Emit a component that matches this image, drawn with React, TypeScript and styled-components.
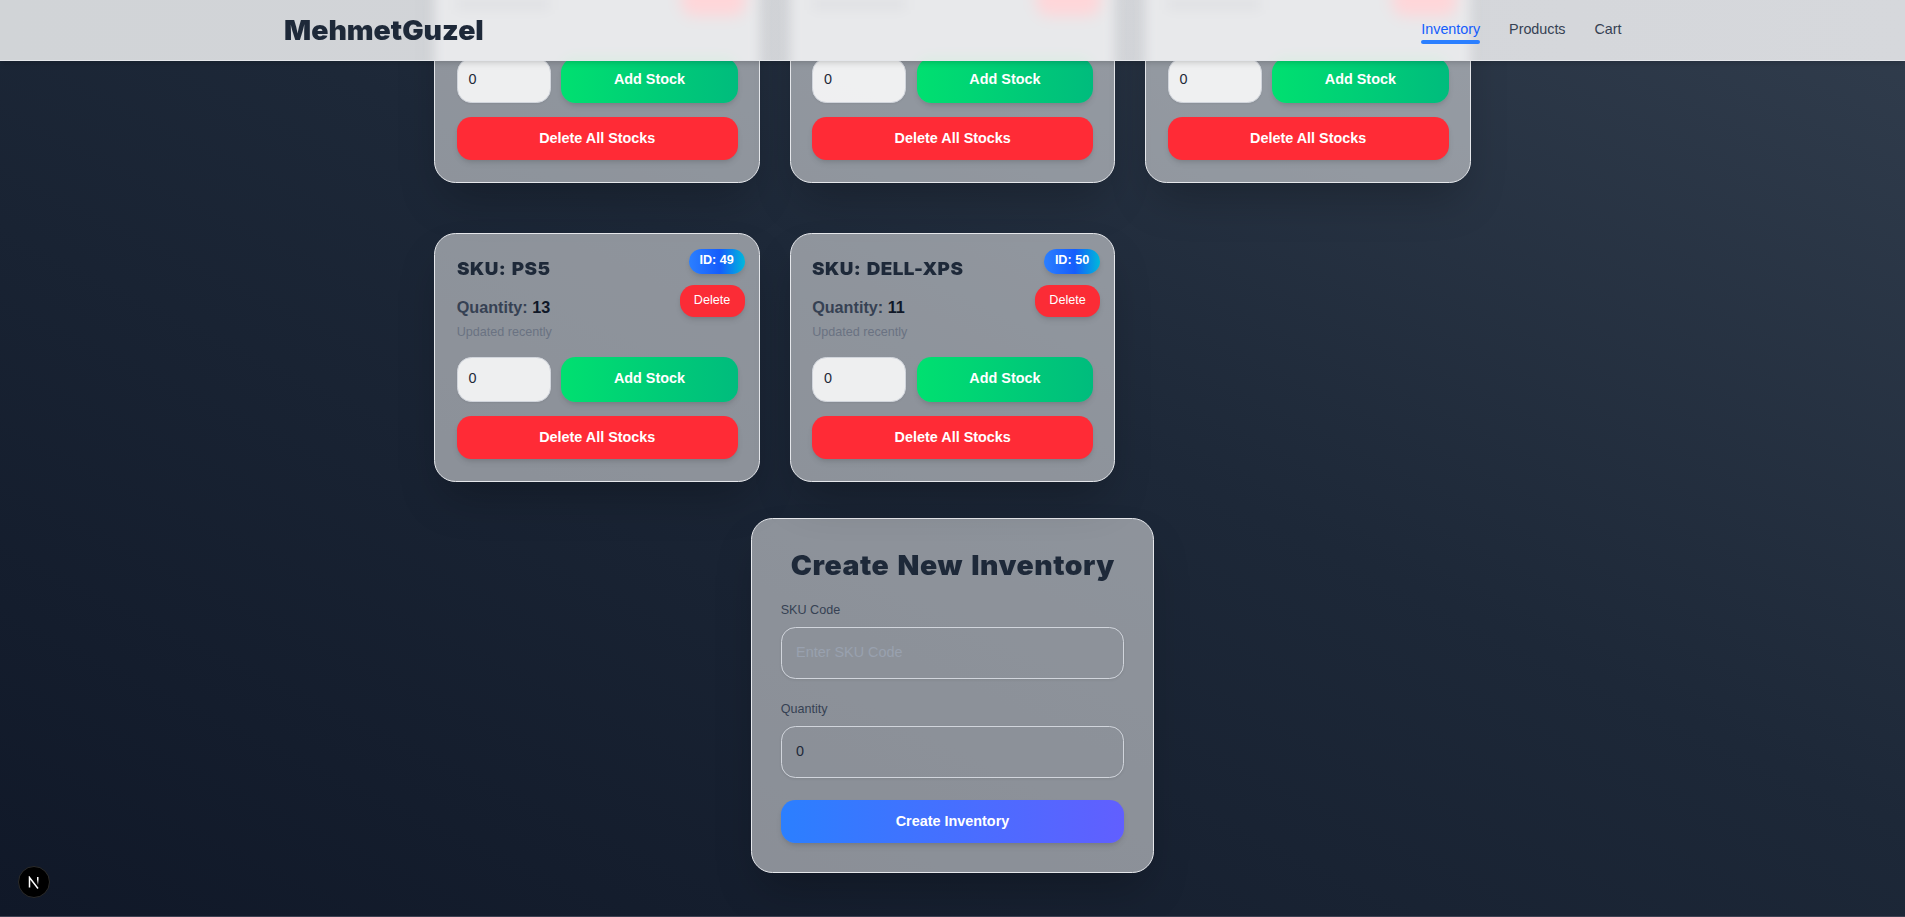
import React from 'react';
import styled, { createGlobalStyle } from 'styled-components';

const GlobalStyle = createGlobalStyle`
  *, *::before, *::after { box-sizing: border-box; }
  html { font-size: 14.4px; }
  body {
    margin: 0;
    height: 917px;
    overflow: hidden;
    font-family: "Liberation Sans", Arial, sans-serif;
    color: #1e2939;
  }
  h1, h2, h3, p { margin: 0; }
  button, input { font-family: inherit; }
`;

const Page = styled.div`
  position: relative;
  height: 917px;
  overflow: hidden;
  background: linear-gradient(to top right, #101828 0%, #1d2838 55%, #313d4d 100%);
  border-bottom: 1px solid #3e4152;
`;

const Header = styled.header`
  position: absolute;
  inset: 0 0 auto 0;
  z-index: 10;
  height: 61px;
  display: flex;
  justify-content: center;
  background: linear-gradient(to right, #d1d4d7, #d2d4d8 30%, #d6d8dc);
  border-bottom: 1px solid #e5e7eb;
  box-shadow: 0 4px 6px -1px rgba(0, 0, 0, 0.1), 0 2px 4px -2px rgba(0, 0, 0, 0.1);
`;

/* Frosted glass: soft shapes of the cards that have scrolled beneath the bar */
const Frost = styled.div`
  position: absolute;
  inset: 0;
  overflow: hidden;
  display: flex;
  justify-content: center;
  gap: 29.6px;
`;

const FrostCard = styled.div`
  position: relative;
  flex: 0 0 325.9px;
  height: 110px;
  margin-top: -24px;
  background: #e8e9eb;
  filter: blur(6px);
  box-shadow: 0 0 26px rgba(0, 0, 0, 0.04);

  &::before {
    content: '';
    position: absolute;
    top: 2px;
    right: 14px;
    width: 65px;
    height: 38px;
    border-radius: 14px;
    background: #ffd6d9;
    filter: blur(4px);
  }

  &::after {
    content: '';
    position: absolute;
    top: 81px;
    right: 22px;
    width: 177px;
    height: 45px;
    border-radius: 14px;
    background: #dcece4;
  }
`;

const FrostText = styled.div`
  position: absolute;
  top: 22px;
  left: 22px;
  width: 94px;
  height: 12px;
  background: #e0e1e4;
`;

const HeaderInner = styled.div`
  position: relative;
  width: 1338px;
  display: flex;
  align-items: center;
  justify-content: space-between;
`;

const Logo = styled.h1`
  font-family: Inter, "Liberation Sans", sans-serif;
  font-size: 26.8px;
  line-height: 32px;
  font-weight: 900;
  transform: scaleX(1.06);
  transform-origin: left center;
`;

const Nav = styled.nav`
  display: flex;
  gap: 29px;
`;

const NavLink = styled.a<{ $active?: boolean }>`
  position: relative;
  height: 28px;
  padding-top: 3px;
  font-size: 14.4px;
  line-height: 21.6px;
  letter-spacing: -0.05px;
  color: ${p => (p.$active ? '#155dfc' : '#364153')};

  &::after {
    content: '';
    position: absolute;
    left: 0;
    right: 0;
    bottom: 0;
    height: 4px;
    border-radius: 2px;
    background: ${p => (p.$active ? '#2b7fff' : 'transparent')};
  }
`;

const Main = styled.main`
  display: flex;
  flex-direction: column;
  align-items: center;
  margin-top: -66px;
`;

const Grid = styled.section`
  width: 1036.8px;
  display: grid;
  grid-template-columns: repeat(3, 1fr);
  column-gap: 29.6px;
  row-gap: 50px;
`;

const cardShadow = '0 22.5px 45px -11px rgba(0, 0, 0, 0.25)';

const Card = styled.article`
  position: relative;
  height: 249px;
  display: flex;
  flex-direction: column;
  padding: 21.6px 21.1px 21.6px 21.6px;
  border: 1px solid #e5e7eb;
  border-radius: 21.6px;
  background: rgba(255, 255, 255, 0.5);
  box-shadow: ${cardShadow};
`;

const Sku = styled.h2`
  font-family: Inter, "Liberation Sans", sans-serif;
  font-size: 17.8px;
  line-height: 25px;
  font-weight: 900;
  letter-spacing: 0.38px;
  word-spacing: 1.4px;
  transform: scaleX(1.06);
  transform-origin: left center;
`;

const Quantity = styled.p`
  margin-top: 14.4px;
  font-size: 16.2px;
  line-height: 25px;
  font-weight: 600;
  color: #364153;
  span { color: #101828; }
`;

const Updated = styled.p`
  margin-top: 3px;
  font-size: 12.6px;
  line-height: 18px;
  color: #6a7282;
`;

const Corner = styled.div`
  position: absolute;
  top: 15px;
  right: 14.4px;
  display: flex;
  flex-direction: column;
  align-items: flex-end;
  gap: 11px;
`;

const raised = '0 4px 6px -1px rgba(0, 0, 0, 0.1), 0 2px 4px -2px rgba(0, 0, 0, 0.1)';

const IdBadge = styled.span`
  width: 56px;
  height: 25px;
  border-radius: 13px;
  background: linear-gradient(to right, #2b7fff, #155dfc 55%, #00b8db);
  box-shadow: ${raised};
  color: #fff;
  font-size: 12.6px;
  line-height: 22px;
  font-weight: 700;
  text-align: center;
`;

const SmallDelete = styled.button`
  width: 65px;
  height: 32px;
  padding: 0 0 3px;
  border: 0;
  border-radius: 14.4px;
  background: #fb2c36;
  box-shadow: ${raised};
  color: #fff;
  font-size: 12.6px;
`;

const StockRow = styled.div`
  display: flex;
  gap: 10.2px;
  height: 45px;
  margin-top: auto;
`;

const StockInput = styled.input`
  width: 94.2px;
  padding: 0 10.8px 3px;
  border: 1px solid #d1d5dc;
  border-radius: 14.4px;
  background: rgba(255, 255, 255, 0.85);
  box-shadow: 0 1px 2px rgba(0, 0, 0, 0.06);
  color: #1e2939;
  font-size: 14.4px;
  outline: 0;
`;

const Action = styled.button<{ $tone: 'add' | 'danger' | 'create' }>`
  flex: ${p => (p.$tone === 'add' ? '1' : '0 0 43px')};
  padding: 0 0 ${p => (p.$tone === 'add' ? '4px' : '2px')};
  border: 0;
  border-radius: 14.4px;
  background: ${p =>
    ({
      add: 'linear-gradient(to right, #00e070, #00bc7d)',
      danger: '#ff2b36',
      create: 'linear-gradient(to right, #2b7fff, #615fff)',
    })[p.$tone]};
  box-shadow: ${raised};
  color: #fff;
  font-size: 14.4px;
  font-weight: 700;
`;

const DeleteAll = styled(Action)`
  margin-top: 14px;
`;

const Form = styled.form`
  width: 403.2px;
  height: 355px;
  margin-top: 36px;
  display: flex;
  flex-direction: column;
  padding: 28.8px;
  border: 1px solid #e5e7eb;
  border-radius: 21.6px;
  background: rgba(255, 255, 255, 0.5);
  box-shadow: ${cardShadow};
`;

const FormTitle = styled.h2`
  font-family: Inter, "Liberation Sans", sans-serif;
  font-size: 26.8px;
  line-height: 34px;
  font-weight: 900;
  text-align: center;
  white-space: nowrap;
  letter-spacing: 0.5px;
  word-spacing: 2px;
  transform: scaleX(1.06);
`;

const Field = styled.label`
  display: flex;
  flex-direction: column;
  margin-top: 19px;
  font-size: 12.6px;
  line-height: 18px;
  color: #364153;

  & + & { margin-top: 21px; }
`;

const FieldInput = styled.input`
  height: 52px;
  margin-top: 8px;
  padding: 0 14.4px 2px;
  border: 1px solid #d1d5dc;
  border-radius: 14.4px;
  background: transparent;
  box-shadow: 0 1px 3px rgba(0, 0, 0, 0.08);
  color: #1e2939;
  font-size: 14.4px;
  outline: 0;
  &::placeholder { color: #99a1af; opacity: 1; }
`;

const Submit = styled(Action)`
  margin-top: auto;
`;

const DevBadge = styled.div`
  position: absolute;
  left: 18px;
  bottom: 18px;
  width: 32px;
  height: 32px;
  display: grid;
  place-items: center;
  border-radius: 50%;
  background: #000;
  border: 1px solid #2b2b2b;
`;

type Item = { id: number; sku?: string; quantity?: number };

const items: Item[] = [
  { id: 46 },
  { id: 47 },
  { id: 48 },
  { id: 49, sku: 'PS5', quantity: 13 },
  { id: 50, sku: 'DELL-XPS', quantity: 11 },
];

function InventoryCard({ item }: { item: Item }) {
  return (
    <Card>
      {item.sku && (
        <>
          <Corner>
            <IdBadge>ID: {item.id}</IdBadge>
            <SmallDelete>Delete</SmallDelete>
          </Corner>
          <Sku>SKU: {item.sku}</Sku>
          <Quantity>Quantity: <span>{item.quantity}</span></Quantity>
          <Updated>Updated recently</Updated>
        </>
      )}
      <StockRow>
        <StockInput defaultValue="0" />
        <Action $tone="add">Add Stock</Action>
      </StockRow>
      <DeleteAll $tone="danger">Delete All Stocks</DeleteAll>
    </Card>
  );
}

export default function App() {
  return (
    <Page>
      <GlobalStyle />
      <Header>
        <Frost>
          <FrostCard><FrostText /></FrostCard>
          <FrostCard><FrostText /></FrostCard>
          <FrostCard><FrostText /></FrostCard>
        </Frost>
        <HeaderInner>
          <Logo>MehmetGuzel</Logo>
          <Nav>
            <NavLink $active>Inventory</NavLink>
            <NavLink>Products</NavLink>
            <NavLink>Cart</NavLink>
          </Nav>
        </HeaderInner>
      </Header>
      <Main>
        <Grid>
          {items.map(item => <InventoryCard key={item.id} item={item} />)}
        </Grid>
        <Form onSubmit={e => e.preventDefault()}>
          <FormTitle>Create New Inventory</FormTitle>
          <Field>
            SKU Code
            <FieldInput placeholder="Enter SKU Code" />
          </Field>
          <Field>
            Quantity
            <FieldInput defaultValue="0" />
          </Field>
          <Submit $tone="create">Create Inventory</Submit>
        </Form>
      </Main>
      <DevBadge>
        <svg width="12" height="13" viewBox="0 0 12 13" fill="none">
          <defs>
            <linearGradient id="stem" x1="0" y1="0" x2="0" y2="1">
              <stop offset="0.3" stopColor="#fff" />
              <stop offset="1" stopColor="#fff" stopOpacity="0" />
            </linearGradient>
          </defs>
          <path d="M1.5 11.5V1.5L10 12.5" stroke="#fff" strokeWidth="1.5" />
          <rect x="9" y="1" width="1.5" height="8" fill="url(#stem)" />
        </svg>
      </DevBadge>
    </Page>
  );
}
